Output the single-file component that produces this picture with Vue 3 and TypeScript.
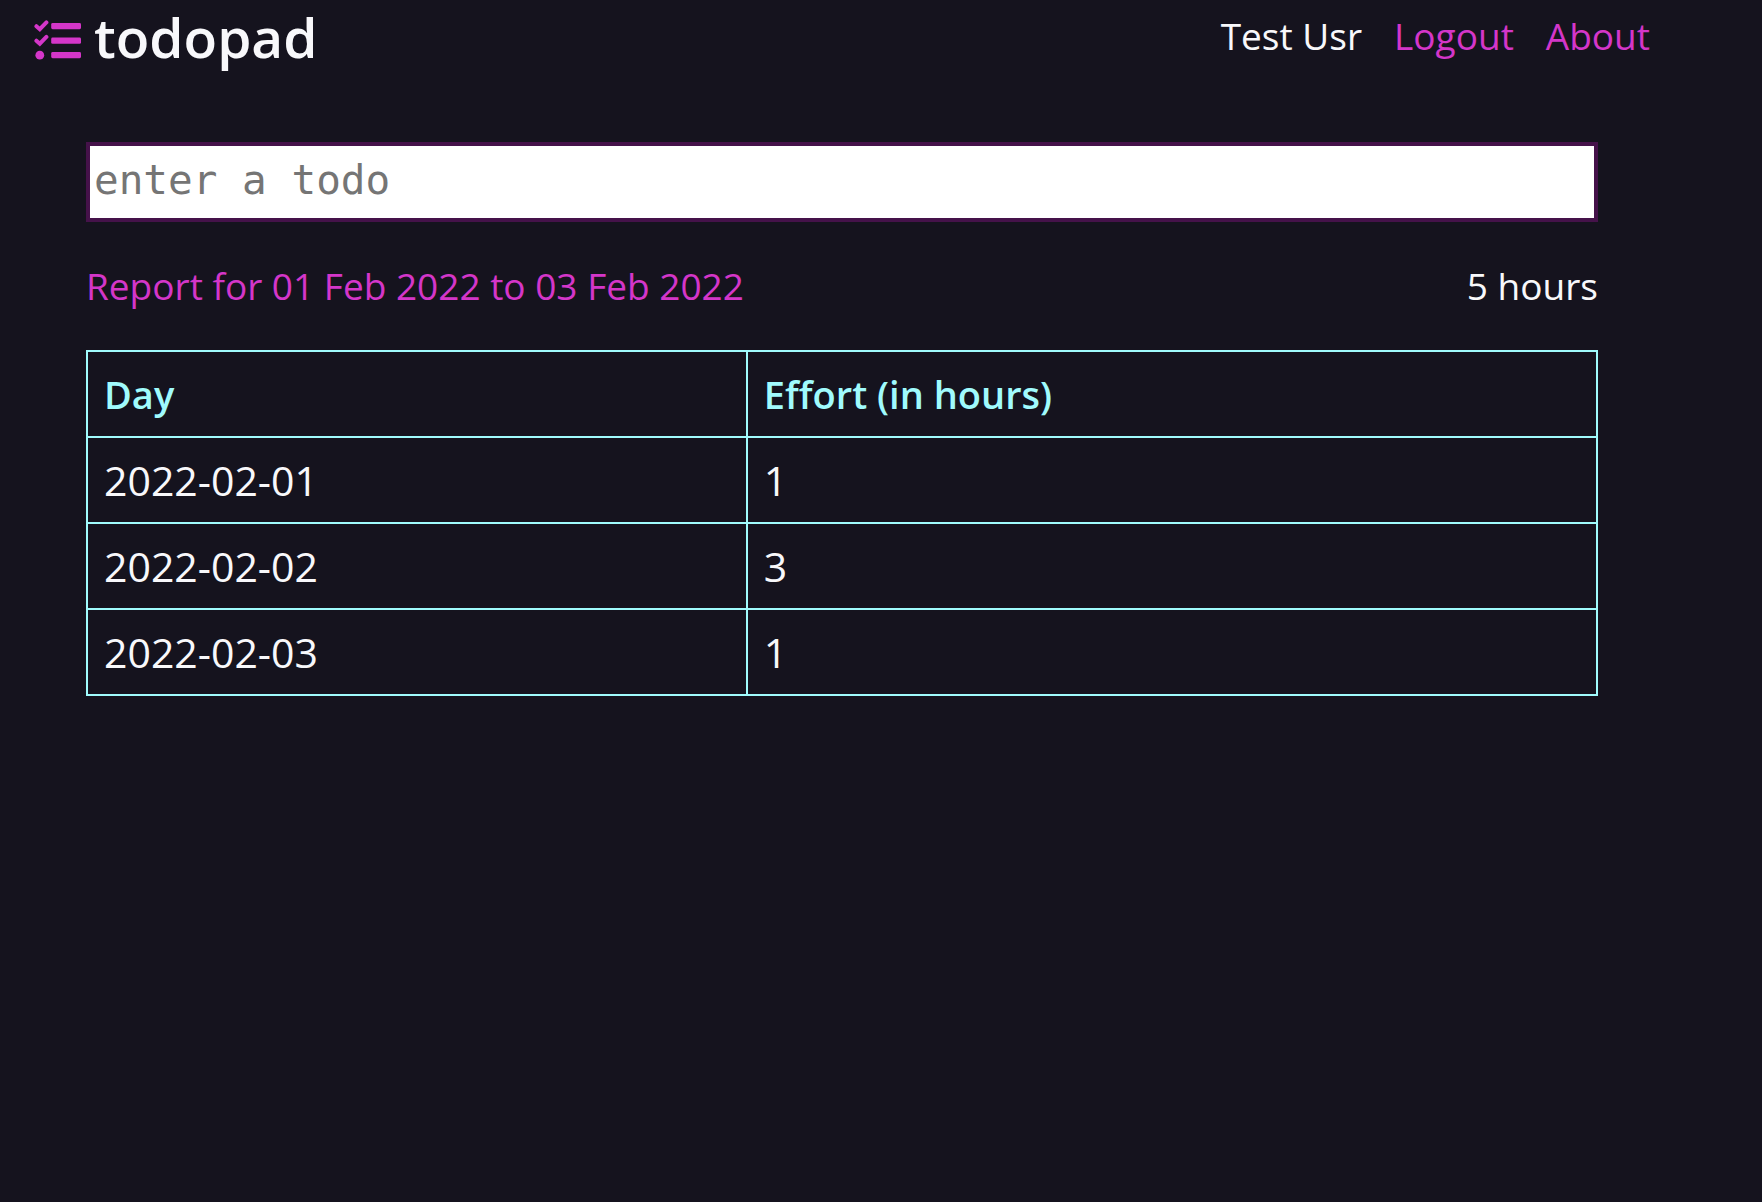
<script setup lang="ts">
import { computed, ref } from 'vue'

interface DayEffort {
  day: string
  hours: number
}

const user = 'Test Usr'
const todo = ref('')
const efforts = ref<DayEffort[]>([
  { day: '2022-02-01', hours: 1 },
  { day: '2022-02-02', hours: 3 },
  { day: '2022-02-03', hours: 1 },
])
const total = computed(() => efforts.value.reduce((sum, e) => sum + e.hours, 0))
</script>

<template>
  <div class="page">
    <header class="bar">
      <h1 class="brand">
        <svg class="logo" viewBox="0 0 48 42" aria-hidden="true">
          <g fill="none" stroke="currentColor" stroke-width="4" stroke-linecap="round" stroke-linejoin="miter">
            <path d="M2.4 6.2 L5.8 9.2 L12.4 2.4" />
            <path d="M2.4 20.7 L5.8 23.7 L12.4 16.9" />
          </g>
          <g fill="currentColor">
            <circle cx="5.8" cy="35.2" r="4.4" />
            <rect x="17.2" y="3" width="29.8" height="6.2" rx="1.4" />
            <rect x="17.2" y="17.6" width="29.8" height="6.2" rx="1.4" />
            <rect x="17.2" y="32" width="29.8" height="6.2" rx="1.4" />
          </g>
        </svg>
        <span>todopad</span>
      </h1>
      <nav class="links">
        <span>{{ user }}</span>
        <a href="#logout">Logout</a>
        <a href="#about">About</a>
      </nav>
    </header>

    <main class="content">
      <input v-model="todo" class="entry" type="text" placeholder="enter a todo" aria-label="enter a todo" />

      <div class="summary">
        <a href="#report">Report for 01 Feb 2022 to 03 Feb 2022</a>
        <span>{{ total }} hours</span>
      </div>

      <table class="report">
        <thead>
          <tr>
            <th class="day" scope="col">Day</th>
            <th scope="col">Effort (in hours)</th>
          </tr>
        </thead>
        <tbody>
          <tr v-for="e in efforts" :key="e.day">
            <td>{{ e.day }}</td>
            <td>{{ e.hours }}</td>
          </tr>
        </tbody>
      </table>
    </main>
  </div>
</template>

<style>
body {
  margin: 0;
  background: #15131e;
}
</style>

<style scoped>
.page {
  min-height: 100vh;
  color: #f8f8fb;
  font-family: 'Open Sans', 'Noto Sans', sans-serif;
  font-size: 37px;
  line-height: 52px;
}

.bar {
  display: flex;
  justify-content: space-between;
  align-items: flex-start;
  padding: 0 112px 0 34px;
}

.brand {
  display: flex;
  align-items: center;
  gap: 12px;
  margin: 0;
  font-size: 55px;
  font-weight: 600;
  line-height: 74px;
}

.logo {
  width: 48px;
  height: 42px;
  margin-top: 8px;
  color: #d436c9;
}

.links {
  display: flex;
  gap: 32px;
  padding-top: 10px;
}

a {
  color: #d436c9;
  text-decoration: none;
}

.content {
  padding: 68px 164px 0 86px;
}

.entry {
  display: block;
  box-sizing: border-box;
  width: 100%;
  height: 80px;
  padding: 0 4px 4px;
  border: 4px solid #45124a;
  border-radius: 0;
  background: #fff;
  color: #16131f;
  font-family: 'DejaVu Sans Mono', monospace;
  font-size: 41px;
  outline: none;
}

.entry::placeholder {
  color: #757575;
  opacity: 1;
}

.summary {
  display: flex;
  justify-content: space-between;
  margin: 38px 0;
}

.report {
  width: 100%;
  table-layout: fixed;
  border-collapse: collapse;
  font-size: 41px;
}

.report th,
.report td {
  box-sizing: border-box;
  padding: 16px;
  border: 2px solid #a0fbfd;
  text-align: left;
}

.report th {
  color: #a0fbfd;
  font-size: 38px;
  font-weight: 600;
}

.report .day {
  width: 43.7%;
}
</style>
